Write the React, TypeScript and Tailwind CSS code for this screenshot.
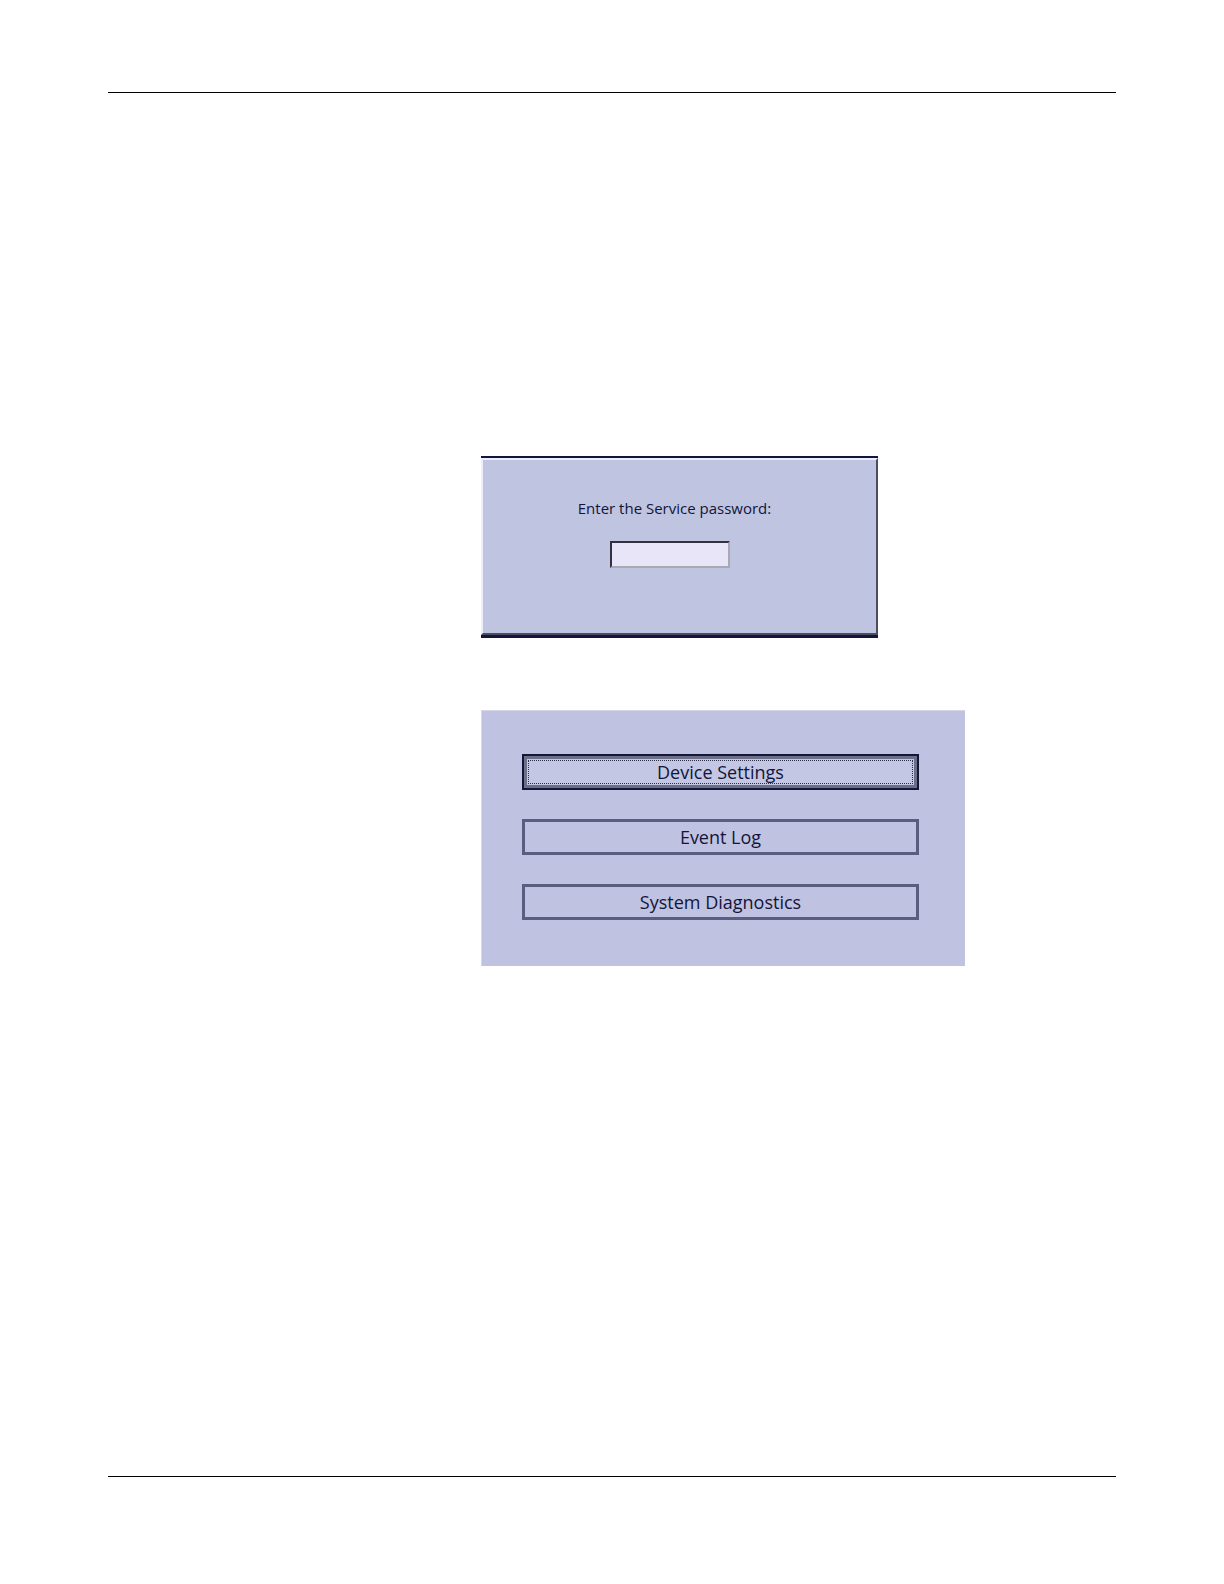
import { useState } from 'react';
import clsx from 'clsx';

const MENU_ITEMS = [
  { id: 'device-settings', label: 'Device Settings' },
  { id: 'event-log', label: 'Event Log' },
  { id: 'system-diagnostics', label: 'System Diagnostics' },
];

function PasswordDialog() {
  const [password, setPassword] = useState('');

  return (
    <form
      className="w-full max-w-[397px] border-t-2 border-b-3 border-[#13163a] bg-[#bfc4e0]"
      onSubmit={(e) => e.preventDefault()}
    >
      <div className="flex flex-col items-center border-2 border-t-[#eceffa] border-r-[#4b4e5e] border-b-[#4b4e5e] border-l-[#eceffa] pt-9 pb-[65px] pr-5">
        <label htmlFor="service-password" className="ml-2.5 text-[15px] leading-6 text-[#12153a]">
          Enter the Service password:
        </label>
        <input
          id="service-password"
          type="password"
          value={password}
          onChange={(e) => setPassword(e.target.value)}
          className="mt-[21px] h-[27px] w-[120px] border-2 border-t-[#35303f] border-r-[#a9a9b4] border-b-[#a9a9b4] border-l-[#35303f] bg-[#e8e5f9] px-1 text-[15px] outline-none"
        />
      </div>
    </form>
  );
}

function ServiceMenu() {
  const [selected, setSelected] = useState('device-settings');

  return (
    <nav className="w-full max-w-[484px] border-t border-l border-[#d6d6e6] bg-[#c0c2e1] pt-[43px] pr-[46px] pb-[46px] pl-10">
      <div className="flex flex-col gap-[29px]">
        {MENU_ITEMS.map((item) => {
          const active = item.id === selected;
          return (
            <button
              key={item.id}
              type="button"
              onClick={() => setSelected(item.id)}
              className={clsx(
                'h-9 w-full text-lg leading-6 text-[#12153a] outline-none',
                active ? 'border-2 border-[#15173a] bg-[#c3c7e4]' : 'border-3 border-[#5b5c80]'
              )}
            >
              {active ? (
                <span className="flex h-full border-3 border-[#6c6f86] p-px">
                  <span className="flex flex-1 items-center justify-center border border-dotted border-[#2c2e4c]">
                    {item.label}
                  </span>
                </span>
              ) : (
                item.label
              )}
            </button>
          );
        })}
      </div>
    </nav>
  );
}

export default function App() {
  return (
    <div className="min-h-screen bg-white px-[108px] pt-[92px] pb-[107px] font-['Open_Sans',sans-serif]">
      <main className="border-y border-black pt-[363px] pb-[510px] pl-[373px]">
        <PasswordDialog />
        <div className="mt-[72px]">
          <ServiceMenu />
        </div>
      </main>
    </div>
  );
}
